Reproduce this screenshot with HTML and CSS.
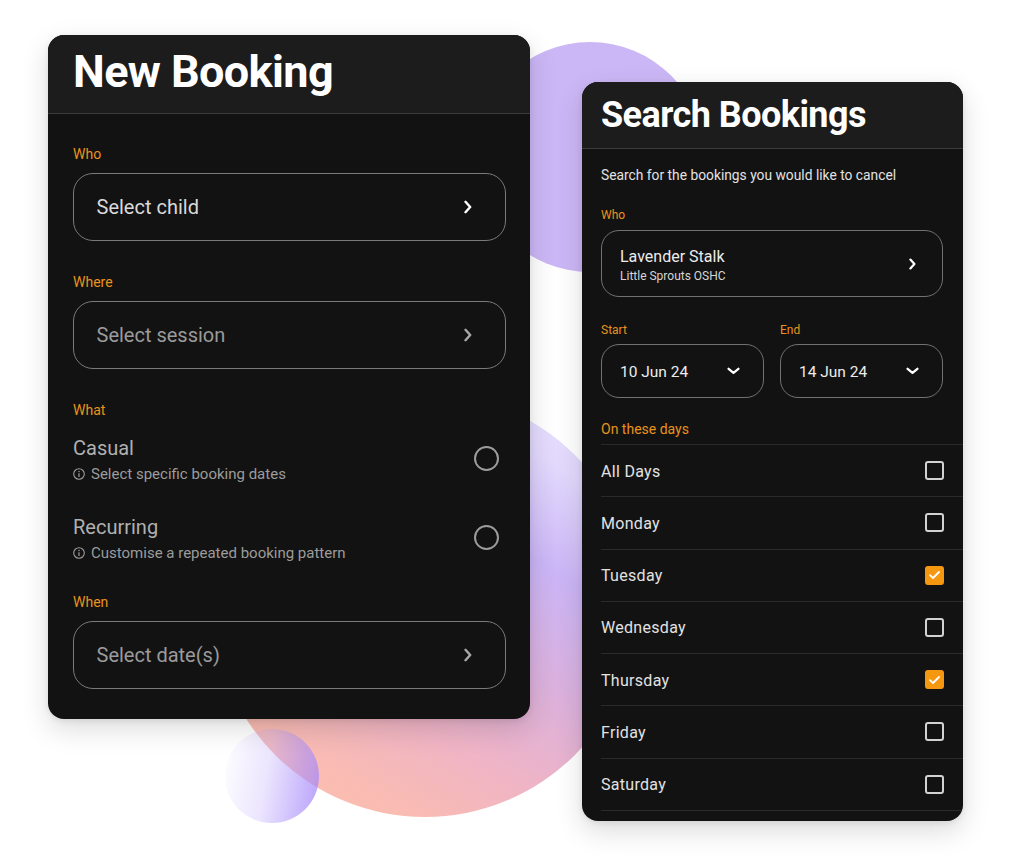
FILE: index.html
```html
<!DOCTYPE html>
<html lang="en">
<head>
<meta charset="utf-8">
<title>Bookings</title>
<link rel="stylesheet" href="styles.css">
</head>
<body>
<div class="stage">
  <div class="blob blob-purple"></div>
  <div class="blob blob-big"></div>
  <div class="blob blob-small"></div>

  <section class="card card-new">
    <header class="card-head"><h1 class="title">New Booking</h1></header>
    <div class="card-body">
      <div class="section">
        <div class="label">Who</div>
        <div class="field">
          <span class="field-text bright">Select child</span>
          <svg class="chev" width="8" height="14" viewBox="0 0 8 14"><polyline points="1.5,1.8 6.2,7 1.5,12.2" fill="none" stroke="#ffffff" stroke-width="2.4" stroke-linecap="round" stroke-linejoin="round"/></svg>
        </div>
      </div>
      <div class="section">
        <div class="label">Where</div>
        <div class="field">
          <span class="field-text dim">Select session</span>
          <svg class="chev" width="8" height="14" viewBox="0 0 8 14"><polyline points="1.5,1.8 6.2,7 1.5,12.2" fill="none" stroke="#a8a8a8" stroke-width="2.4" stroke-linecap="round" stroke-linejoin="round"/></svg>
        </div>
      </div>
      <div class="section">
        <div class="label label-what">What</div>
        <div class="options">
          <div class="option">
            <div class="opt-text">
              <div class="opt-title">Casual</div>
              <div class="opt-sub">
                <svg class="info" width="12" height="12" viewBox="0 0 12 12"><circle cx="6" cy="6" r="5.3" fill="none" stroke="#9c9c9c" stroke-width="1.1"/><line x1="6" y1="5.2" x2="6" y2="9" stroke="#9c9c9c" stroke-width="1.2"/><circle cx="6" cy="3.4" r="0.75" fill="#9c9c9c"/></svg>
                <span>Select specific booking dates</span>
              </div>
            </div>
            <div class="radio"></div>
          </div>
          <div class="option">
            <div class="opt-text">
              <div class="opt-title">Recurring</div>
              <div class="opt-sub">
                <svg class="info" width="12" height="12" viewBox="0 0 12 12"><circle cx="6" cy="6" r="5.3" fill="none" stroke="#9c9c9c" stroke-width="1.1"/><line x1="6" y1="5.2" x2="6" y2="9" stroke="#9c9c9c" stroke-width="1.2"/><circle cx="6" cy="3.4" r="0.75" fill="#9c9c9c"/></svg>
                <span>Customise a repeated booking pattern</span>
              </div>
            </div>
            <div class="radio"></div>
          </div>
        </div>
      </div>
      <div class="section section-when">
        <div class="label">When</div>
        <div class="field">
          <span class="field-text dim">Select date(s)</span>
          <svg class="chev" width="8" height="14" viewBox="0 0 8 14"><polyline points="1.5,1.8 6.2,7 1.5,12.2" fill="none" stroke="#a8a8a8" stroke-width="2.4" stroke-linecap="round" stroke-linejoin="round"/></svg>
        </div>
      </div>
    </div>
  </section>

  <section class="card card-search">
    <header class="card-head"><h1 class="title">Search Bookings</h1></header>
    <div class="card-body">
      <p class="desc">Search for the bookings you would like to cancel</p>
      <div class="label small">Who</div>
      <div class="field person">
        <div class="person-text">
          <div class="person-name">Lavender Stalk</div>
          <div class="person-place">Little Sprouts OSHC</div>
        </div>
        <svg class="chev" width="7" height="12" viewBox="0 0 7 12"><polyline points="1.4,1.6 5.4,6 1.4,10.4" fill="none" stroke="#ffffff" stroke-width="2.2" stroke-linecap="round" stroke-linejoin="round"/></svg>
      </div>
      <div class="dates">
        <div class="date-col">
          <div class="label small">Start</div>
          <div class="field date">
            <span class="date-text">10 Jun 24</span>
            <svg width="13" height="8" viewBox="0 0 13 8"><polyline points="1.6,1.8 6.5,5.8 11.4,1.8" fill="none" stroke="#ffffff" stroke-width="2.3" stroke-linecap="round" stroke-linejoin="round"/></svg>
          </div>
        </div>
        <div class="date-col">
          <div class="label small">End</div>
          <div class="field date">
            <span class="date-text">14 Jun 24</span>
            <svg width="13" height="8" viewBox="0 0 13 8"><polyline points="1.6,1.8 6.5,5.8 11.4,1.8" fill="none" stroke="#ffffff" stroke-width="2.3" stroke-linecap="round" stroke-linejoin="round"/></svg>
          </div>
        </div>
      </div>
      <div class="label days-label">On these days</div>
      <ul class="days">
        <li class="day"><span>All Days</span><span class="box"></span></li>
        <li class="day"><span>Monday</span><span class="box"></span></li>
        <li class="day"><span>Tuesday</span><span class="box checked"><svg width="13" height="10" viewBox="0 0 13 10"><polyline points="2,5.2 5,8 11,2" fill="none" stroke="#ffffff" stroke-width="1.8" stroke-linecap="round" stroke-linejoin="round"/></svg></span></li>
        <li class="day"><span>Wednesday</span><span class="box"></span></li>
        <li class="day"><span>Thursday</span><span class="box checked"><svg width="13" height="10" viewBox="0 0 13 10"><polyline points="2,5.2 5,8 11,2" fill="none" stroke="#ffffff" stroke-width="1.8" stroke-linecap="round" stroke-linejoin="round"/></svg></span></li>
        <li class="day"><span>Friday</span><span class="box"></span></li>
        <li class="day"><span>Saturday</span><span class="box"></span></li>
      </ul>
    </div>
  </section>
</div>
</body>
</html>
```

FILE: styles.css
```css
* { box-sizing: border-box; margin: 0; padding: 0; }
html, body { width: 1024px; height: 855px; }
body {
  background: #ffffff;
  font-family: Roboto, "Noto Sans", "Liberation Sans", sans-serif;
  overflow: hidden;
}
.stage {
  position: relative;
  width: 1024px;
  height: 855px;
  display: flex;
  align-items: flex-start;
  gap: 52px;
  padding: 35px 0 0 48px;
}

/* decorative background shapes */
.blob { position: absolute; border-radius: 50%; z-index: 0; }
.blob-purple {
  left: 475px; top: 42px; width: 230px; height: 230px;
  background: #ccb7f6;
}
.blob-big {
  left: 213px; top: 393px; width: 424px; height: 424px;
  background: linear-gradient(210deg, #ebe4fe 0%, #e2d9fd 18%, #cbb5f6 34%, #dcb1dc 52%, #efb4c6 68%, #f9bbb3 82%, #fdc3ab 100%);
}
.blob-small {
  left: 225px; top: 729px; width: 94px; height: 94px;
  background: linear-gradient(100deg, rgba(196,178,252,0) 0%, rgba(190,170,252,0.3) 45%, rgba(165,135,250,0.8) 100%);
}

/* cards */
.card {
  position: relative;
  z-index: 1;
  background: #121212;
  border-radius: 16px;
  overflow: hidden;
  box-shadow: 0 10px 28px rgba(0,0,0,0.14), 0 2px 6px rgba(0,0,0,0.08);
  color: #e6e6e6;
}
.card-new { width: 482px; }
.card-search { width: 381px; margin-top: 47px; }

.card-head {
  background: #1c1c1c;
  border-bottom: 1px solid #3c3c3c;
}
.title { font-weight: 700; color: #ffffff; }
.card-new .card-head { height: 79px; padding: 14px 25px 0; }
.card-new .title { font-size: 45px; line-height: 45px; letter-spacing: -0.6px; }
.card-search .card-head { height: 67px; padding: 15px 20px 0 19px; }
.card-search .title { font-size: 36px; line-height: 36px; letter-spacing: -0.55px; }

/* New booking body */
.card-new .card-body {
  display: flex;
  flex-direction: column;
  gap: 31px;
  padding: 30px 24px 30px 25px;
}
.section-when { margin-top: -2px; }

.label {
  font-size: 14px;
  line-height: 20px;
  color: #e8931e;
  margin-bottom: 9px;
}
.label-what { margin-bottom: 16px; }

.field {
  display: flex;
  align-items: center;
  justify-content: space-between;
  height: 68px;
  border: 1.5px solid #7a7a7a;
  border-radius: 20px;
  padding: 0 33.5px 0 22.5px;
}
.field-text { font-size: 20px; line-height: 24px; }
.field-text.bright { color: #d9d9d9; }
.field-text.dim { color: #9b9b9b; }
.chev { display: block; }

.options { display: flex; flex-direction: column; gap: 31px; }
.option { display: flex; align-items: center; justify-content: space-between; }
.opt-title { font-size: 20px; line-height: 24px; color: #b0b0b0; }
.opt-sub {
  display: flex;
  align-items: center;
  gap: 6px;
  margin-top: 4px;
  font-size: 15px;
  line-height: 20px;
  color: #9c9c9c;
}
.info { display: block; flex: none; }
.radio {
  width: 25px;
  height: 25px;
  border: 2px solid #9c9c9c;
  border-radius: 50%;
  margin-right: 7px;
  margin-bottom: 4px;
}

/* Search body */
.card-search .card-body { padding: 15.5px 0 10px 19px; }
.desc {
  font-size: 13.8px;
  line-height: 20px;
  color: #e2e2e2;
  margin-bottom: 22.5px;
}
.label.small { font-size: 12px; line-height: 16px; margin-bottom: 7px; }

.field.person {
  height: 67px;
  border-radius: 18px;
  padding: 0 26px 0 18px;
  margin-right: 20px;
  border-color: #727272;
}
.person-text { padding-top: 4px; }
.person-name { font-size: 16px; line-height: 20px; color: #ececec; }
.person-place { font-size: 12px; line-height: 16px; color: #d6d6d6; margin-top: 1px; }

.dates {
  display: grid;
  grid-template-columns: 1fr 1fr;
  gap: 16px;
  margin: 25px 20px 0 0;
}
.date-col .label.small { margin-bottom: 6px; }
.field.date {
  height: 54px;
  border-radius: 18px;
  padding: 0 23px 0 18px;
  border-color: #727272;
}
.date-text { font-size: 15.5px; line-height: 20px; color: #ececec; padding-top: 1px; }

.days-label { margin: 21px 0 5px; }
.days { list-style: none; }
.day {
  display: flex;
  align-items: center;
  justify-content: space-between;
  height: 52.25px;
  border-top: 1px solid #2a2a2a;
  padding-right: 19px;
  font-size: 16px;
  letter-spacing: 0.3px;
  color: #e2e2e2;
}
.day > span:first-child { padding-top: 1px; }
.day:last-child { height: 53.25px; border-bottom: 1px solid #2a2a2a; }
.box {
  display: flex;
  align-items: center;
  justify-content: center;
  width: 19px;
  height: 19px;
  border: 2px solid #d2d2d2;
  border-radius: 3px;
}
.box.checked { background: #f6980f; border-color: #f6980f; }
.box svg { display: block; }
```
